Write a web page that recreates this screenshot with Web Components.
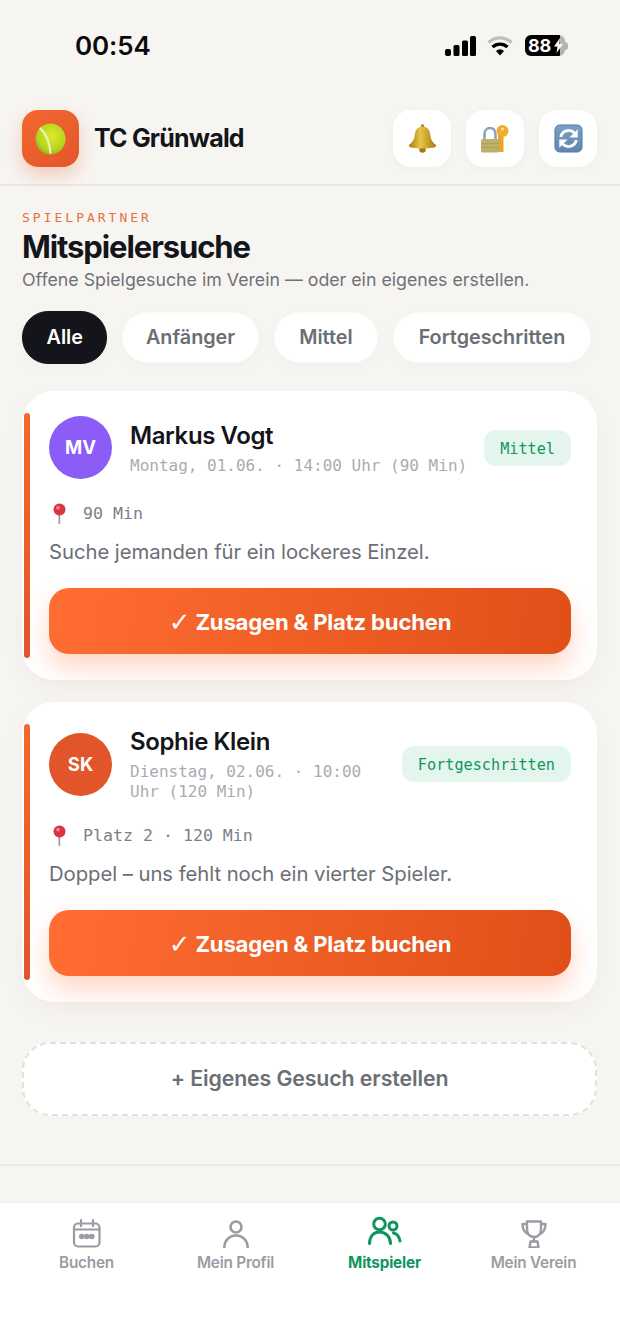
<!doctype html>
<html lang="de">
<head>
<meta charset="utf-8">
<title>TC Grünwald</title>
<style>
  html, body { margin: 0; padding: 0; }
  body {
    width: 620px;
    height: 1344px;
    overflow: hidden;
    background: #f7f5f2;
    font-family: Inter, "Liberation Sans", sans-serif;
    display: flex;
    flex-direction: column;
  }
</style>
</head>
<body>
<status-bar></status-bar>
<app-header>
  <icon-button icon="bell"></icon-button>
  <icon-button icon="lock"></icon-button>
  <icon-button icon="sync"></icon-button>
</app-header>
<partner-page>
  <filter-chip active>Alle</filter-chip>
  <filter-chip style="--pad: 22.500px">Anfänger</filter-chip>
  <filter-chip style="--pad: 24.500px">Mittel</filter-chip>
  <filter-chip style="--pad: 24.500px">Fortgeschritten</filter-chip>
  <game-card slot="cards" initials="MV" avatar="#8b5cf6" name="Markus Vogt" level="Mittel"
    when="Montag, 01.06. · 14:00 Uhr (90 Min)" where="90 Min">Suche jemanden für ein lockeres Einzel.</game-card>
  <game-card slot="cards" initials="SK" avatar="#e2552a" name="Sophie Klein" level="Fortgeschritten"
    when="Dienstag, 02.06. · 10:00 Uhr (120 Min)" where="Platz 2 · 120 Min">Doppel – uns fehlt noch ein vierter Spieler.</game-card>
</partner-page>
<tab-bar>
  <tab-item icon="calendar">Buchen</tab-item>
  <tab-item icon="person">Mein Profil</tab-item>
  <tab-item icon="people" active>Mitspieler</tab-item>
  <tab-item icon="trophy">Mein Verein</tab-item>
</tab-bar>

<script>
const ICONS = {
  bell: `<svg width="29" height="29" viewBox="0 0 29 29">
    <defs><linearGradient id="b" x1="0" x2="1"><stop offset="0" stop-color="#a87a10"/><stop offset=".42" stop-color="#e8c544"/><stop offset="1" stop-color="#a9790f"/></linearGradient></defs>
    <circle cx="14.500" cy="25.500" r="3.200" fill="#a8701a"/>
    <circle cx="14.500" cy="2" r="1.800" fill="#a9800f"/>
    <path d="M14.500 2.500c-5 0-7.300 3.500-7.800 8.700-.4 4.500-2.300 7-5.500 9.600-.8 1.300.2 2.400 1.700 2.700 7.500 1.200 15.700 1.200 23.200 0 1.500-.3 2.500-1.400 1.700-2.700-3.200-2.600-5.100-5.100-5.500-9.600-.5-5.200-2.800-8.700-7.800-8.700z" fill="url(#b)"/>
  </svg>`,
  lock: `<svg width="28" height="28" viewBox="0 0 28 28">
    <path d="M3.500 15V9.500C3.500 6 5.500 3 9 3s5.500 2.500 5.500 6.500V15" fill="none" stroke="#8ea3ba" stroke-width="2.600"/>
    <path d="M17 9h5.500v18H17z" fill="#e9a42a"/>
    <rect x="0" y="14" width="18" height="13.500" rx="1.500" fill="#bdb06a"/>
    <path d="M0 18.500h18M0 22.500h18" stroke="#a99b56" stroke-width=".8"/>
    <circle cx="21.500" cy="6" r="6" fill="#f0ac2e"/>
    <circle cx="21.500" cy="4" r="1.600" fill="#fbe2a6"/>
  </svg>`,
  sync: `<svg width="29" height="29" viewBox="0 0 30 30">
    <defs><linearGradient id="s" x1="0" x2="0" y1="0" y2="1"><stop offset="0" stop-color="#7aa0c6"/><stop offset="1" stop-color="#5f86ad"/></linearGradient></defs>
    <rect x="1" y="1" width="28" height="28" rx="5" fill="url(#s)" stroke="#57799d"/>
    <path d="M7 13.500a8.200 8.200 0 0 1 14-4.300" fill="none" stroke="#fff" stroke-width="3"/>
    <path d="M24.500 5.500v8.500h-8.500z" fill="#fff"/>
    <path d="M23 16.500a8.200 8.200 0 0 1-14 4.300" fill="none" stroke="#fff" stroke-width="3"/>
    <path d="M5.500 24.500V16h8.500z" fill="#fff"/>
  </svg>`,
  ball: `<svg width="31" height="32" viewBox="0 0 32 32" preserveAspectRatio="none">
    <defs><radialGradient id="t" cx=".55" cy=".4" r=".65"><stop offset="0" stop-color="#dcea2a"/><stop offset=".7" stop-color="#b7d41f"/><stop offset="1" stop-color="#8fae1b"/></radialGradient></defs>
    <circle cx="16" cy="16" r="15.500" fill="url(#t)"/>
    <path d="M5 5c6 5 10 14 11 25.500" fill="none" stroke="#eef3c8" stroke-width="2.200"/>
  </svg>`,
  pin: `<svg width="15" height="21" viewBox="0 0 15 21">
    <rect x="6.500" y="9" width="1.700" height="12" rx=".8" fill="#9a9a9a"/>
    <circle cx="7.500" cy="6.500" r="6" fill="#d9343f"/>
    <circle cx="6" cy="4.700" r="1.800" fill="#f28b90"/>
  </svg>`,
  calendar: `<svg width="30" height="32" viewBox="0 -3 30 32" fill="none" stroke="currentColor" stroke-width="2.200" stroke-linecap="round">
    <rect x="2" y="4.500" width="25.500" height="23" rx="4"/>
    <path d="M9 1.200v6M21 1.200v6M2 10.500h25.500"/>
    <g fill="currentColor" stroke="none"><circle cx="9.800" cy="17.500" r="2.800"/><circle cx="14.800" cy="17.500" r="2.800"/><circle cx="19.800" cy="17.500" r="2.800"/></g>
  </svg>`,
  person: `<svg width="30" height="32" viewBox="0 0 30 32" fill="none" stroke="currentColor" stroke-width="2.600">
    <circle cx="15" cy="11" r="5.500"/>
    <path d="M3.300 32c0-7.500 5-12.500 11.700-12.500S26.700 24.500 26.700 32"/>
  </svg>`,
  people: `<svg width="36" height="32" viewBox="0 0 36 32" fill="none" stroke="currentColor" stroke-width="3" stroke-linecap="round">
    <circle cx="12.500" cy="8" r="5.800"/>
    <circle cx="26" cy="10" r="4"/>
    <path d="M2.500 27.500c0-7 4-11.500 10-11.500S23.500 20.500 23.500 27.500"/>
    <path d="M26.500 17c3.500 .5 5.500 3 6.500 8"/>
  </svg>`,
  trophy: `<svg width="26" height="32" viewBox="0 -3 26 32" fill="none" stroke="currentColor" stroke-width="2.400" stroke-linejoin="round">
    <path d="M6 2.500h14v7.500c0 5-3 8-7 8s-7-3-7-8z"/>
    <path d="M6 5H1.500c0 5 1.500 8.500 6 10M20 5h4.500c0 5-1.500 8.500-6 10"/>
    <path d="M13 18v4"/>
    <path d="M9.500 22.500h7l1 6h-9z"/>
  </svg>`
};

class StatusBar extends HTMLElement {
  connectedCallback() {
    this.attachShadow({ mode: 'open' }).innerHTML = `
      <style>
        :host { display: flex; flex: none; height: 92px; padding: 0 52px 0 75px; box-sizing: border-box;
          justify-content: space-between; align-items: flex-start; }
        .time { font: 600 26px/1 Inter, sans-serif; color: #0b0b0d; margin-top: 33px; letter-spacing: -.1px; }
        .icons { display: flex; align-items: center; gap: 11px; margin-top: 35px; }
        .wifi { margin-right: 1px; }
        .batt { position: relative; width: 40px; height: 21px; border-radius: 6px; background: linear-gradient(90deg,#000 87%,#b4b4b4 87%);
          color: #fff; font: 700 18px/21px Inter, sans-serif; padding-left: 3px; box-sizing: border-box; overflow: hidden; white-space: nowrap; letter-spacing: -.2px; }
        .batt svg { position: absolute; left: 29px; top: 3px; }
        .cap { width: 3px; height: 8px; background: #b4b4b4; border-radius: 0 3px 3px 0; margin-left: -11px; }
      </style>
      <div class="time">00:54</div>
      <div class="icons">
        <svg width="31" height="20" viewBox="0 0 31 20" fill="#000">
          <rect x="0" y="13" width="6" height="7" rx="2"/><rect x="8.500" y="9" width="6" height="11" rx="1.500"/>
          <rect x="17" y="4.500" width="6" height="15.500" rx="1.500"/><rect x="25" y="0" width="6" height="20" rx="1.500"/>
        </svg>
        <svg class="wifi" width="26" height="20" viewBox="0 0 26 20" fill="none">
          <path d="M1.500 6.500a16.500 16.500 0 0 1 23 0" stroke="#bdbdbd" stroke-width="3.200"/>
          <path d="M5.500 11a11 11 0 0 1 15 0" stroke="#000" stroke-width="3.200"/>
          <path d="M9 15a5.500 5.500 0 0 1 8 0l-4 4.500z" fill="#000"/>
        </svg>
        <div class="batt">88<svg width="9" height="15" viewBox="0 0 9 15" fill="#fff"><path d="M6 0 0 8.500h3.500L2.500 15 9 6H5.300z"/></svg></div>
        <div class="cap"></div>
      </div>`;
  }
}

class AppHeader extends HTMLElement {
  connectedCallback() {
    this.attachShadow({ mode: 'open' }).innerHTML = `
      <style>
        :host { display: flex; flex: none; align-items: center; box-sizing: border-box; height: 94px; padding: 18px 23px 17px 22px;
          border-bottom: 2px solid #e9e8e5; }
        .logo { width: 57px; height: 57px; border-radius: 16px; background: linear-gradient(145deg,#f4682f,#e2552a);
          display: flex; align-items: center; justify-content: center; box-shadow: 0 8px 18px rgba(232,90,40,.28); }
        .name { font: 700 25px/1 Inter, sans-serif; letter-spacing: -.8px; color: #14151a; margin-left: 15px; flex: 1; }
        .actions { display: flex; gap: 15px; }
      </style>
      <div class="logo">${ICONS.ball}</div>
      <div class="name">TC Grünwald</div>
      <div class="actions"><slot></slot></div>`;
  }
}

class IconButton extends HTMLElement {
  connectedCallback() {
    this.attachShadow({ mode: 'open' }).innerHTML = `
      <style>
        :host { display: flex; width: 58px; height: 57px; align-items: center; justify-content: center; background: #fff;
          border-radius: 18px; box-shadow: 0 2px 8px rgba(0,0,0,.03); }
      </style>
      ${ICONS[this.getAttribute('icon')]}`;
  }
}

class PartnerPage extends HTMLElement {
  connectedCallback() {
    this.attachShadow({ mode: 'open' }).innerHTML = `
      <style>
        :host { display: flex; flex-direction: column; flex: 1; box-sizing: border-box; padding: 24px 23px 0 22px; min-height: 0; }
        .eyebrow { font: 400 13px/15px "DejaVu Sans Mono", monospace; letter-spacing: 3px; color: #e8703d; }
        h1 { margin: 4px 0 0; font: 700 31px/36px Inter, sans-serif; letter-spacing: -1.100px; color: #14151a; }
        .sub { margin: 4px 0 0; font: 400 17.750px/22px Inter, sans-serif; color: #6f7178; }
        .chips { display: flex; gap: 15px; margin-top: 20px; }
        .cards { display: flex; flex-direction: column; gap: 22px; margin-top: 27px; }
        .create { margin-top: 40px; height: 74px; box-sizing: border-box; border: 2px dashed #e5e0d8; border-radius: 28px; background: #fff;
          display: flex; align-items: center; justify-content: center; font: 600 21.300px/1 Inter, sans-serif; color: #6c6e75; letter-spacing: -.1px; }
        .rule { margin: 48px -23px 0 -22px; border-top: 2px solid #eaeae7; }
      </style>
      <div class="eyebrow">SPIELPARTNER</div>
      <h1>Mitspielersuche</h1>
      <p class="sub">Offene Spielgesuche im Verein — oder ein eigenes erstellen.</p>
      <div class="chips"><slot></slot></div>
      <div class="cards"><slot name="cards"></slot></div>
      <div class="create">+ Eigenes Gesuch erstellen</div>
      <div class="rule"></div>`;
  }
}

class FilterChip extends HTMLElement {
  connectedCallback() {
    this.attachShadow({ mode: 'open' }).innerHTML = `
      <style>
        :host { display: flex; align-items: center; height: 51px; margin-top: 1px; padding: 0 var(--pad, 23px); border-radius: 26px; background: #fff;
          border: 1px solid #fbfaf8; box-sizing: border-box; font: 600 19.800px/1 Inter, sans-serif; color: #6c6e75; box-shadow: 0 4px 14px rgba(0,0,0,.025); }
        :host([active]) { background: #14151a; color: #fff; height: 53px; margin-top: 0; border-color: #14151a; padding: 0 23.500px; }
      </style>
      <slot></slot>`;
  }
}

class GameCard extends HTMLElement {
  connectedCallback() {
    const a = (n) => this.getAttribute(n);
    this.attachShadow({ mode: 'open' }).innerHTML = `
      <style>
        :host { display: block; position: relative; box-sizing: border-box; background: #fff; border-radius: 32px; padding: 25px 26px 26px 27px;
          box-shadow: 0 8px 26px rgba(0,0,0,.035); }
        .bar { position: absolute; left: 2px; top: 22px; bottom: 22px; width: 6px; border-radius: 3px; background: linear-gradient(180deg,#f4682f,#e2552a); }
        .top { display: flex; align-items: center; }
        .avatar { flex: none; width: 63px; height: 63px; border-radius: 50%; background: ${a('avatar')}; color: #fff; display: flex;
          align-items: center; justify-content: center; font: 700 18.500px/1 Inter, sans-serif; }
        .who { margin: 0 12px 0 18px; min-width: 0; flex: 1; }
        .name { font: 600 24px/30px Inter, sans-serif; letter-spacing: -.4px; color: #14151a; }
        .when { font: 400 16px/20px "DejaVu Sans Mono", monospace; color: #aaacb1; margin: 5px 0 -1px; }
        .badge { flex: none; height: 36px; padding: 0 16px; border-radius: 12px; background: #e4f5ee; color: #0f9560;
          font: 500 15.200px/38px "DejaVu Sans Mono", monospace; }
        .where { display: flex; align-items: center; gap: 16px; height: 22px; margin-top: 23px; font: 400 16.600px/22px "DejaVu Sans Mono", monospace; color: #7d7f86; }
        .where svg { margin-left: 3px; }
        .where span { padding-top: 2px; }
        .text { font: 400 20.300px/26px Inter, sans-serif; color: #6c6e75; margin-top: 15px; letter-spacing: -.05px; }
        .cta { margin-top: 23px; height: 66px; box-sizing: border-box; padding-top: 2px; border-radius: 20px; background: linear-gradient(100deg,#ff6d33,#df4f17); color: #fff;
          display: flex; align-items: center; justify-content: center; font: 700 22.100px/1 Inter, sans-serif; letter-spacing: -.2px;
          box-shadow: 0 14px 26px rgba(255,107,53,.28); white-space: pre; }
        .check { font: 700 26px/1 "DejaVu Sans", sans-serif; }
      </style>
      <div class="bar"></div>
      <div class="top">
        <div class="avatar">${a('initials')}</div>
        <div class="who">
          <div class="name">${a('name')}</div>
          <div class="when">${a('when')}</div>
        </div>
        <div class="badge">${a('level')}</div>
      </div>
      <div class="where">${ICONS.pin}<span>${a('where')}</span></div>
      <div class="text"><slot></slot></div>
      <div class="cta"><span class="check">✓</span> Zusagen &amp; Platz buchen</div>`;
  }
}

class TabBar extends HTMLElement {
  connectedCallback() {
    this.attachShadow({ mode: 'open' }).innerHTML = `
      <style>
        :host { display: grid; flex: none; grid-template-columns: repeat(4, 149px); justify-content: center; box-sizing: border-box; height: 142px;
          padding-top: 13px; background: #fff; border-top: 1px solid #ecebe8; }
      </style>
      <slot></slot>`;
  }
}

class TabItem extends HTMLElement {
  connectedCallback() {
    this.attachShadow({ mode: 'open' }).innerHTML = `
      <style>
        :host { display: flex; flex-direction: column; align-items: center; gap: 5px; color: #9a9ca3;
          font: 600 15.300px/20px Inter, sans-serif; letter-spacing: -.2px; }
        :host([active]) { color: #0f9560; font-weight: 700; }
        svg { display: block; }
      </style>
      ${ICONS[this.getAttribute('icon')]}
      <slot></slot>`;
  }
}

customElements.define('status-bar', StatusBar);
customElements.define('app-header', AppHeader);
customElements.define('icon-button', IconButton);
customElements.define('partner-page', PartnerPage);
customElements.define('filter-chip', FilterChip);
customElements.define('game-card', GameCard);
customElements.define('tab-bar', TabBar);
customElements.define('tab-item', TabItem);
</script>
</body>
</html>
